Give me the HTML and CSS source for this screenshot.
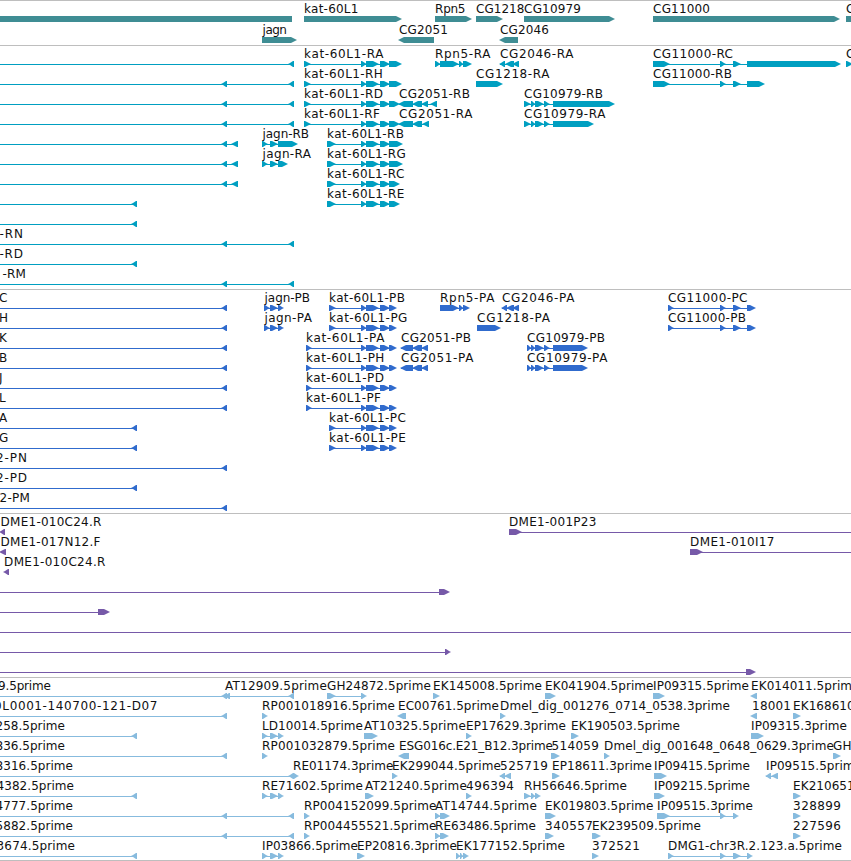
FILE: index.html
```html
<!DOCTYPE html>
<html lang="en">
<head>
    <meta charset="UTF-8">
    <meta name="viewport" content="width=device-width, initial-scale=1.0">
    <title>Genome Browser</title>
    <link rel="stylesheet" href="styles.css">
</head>
<body>
    <main class="browser">
        <section class="track genes" id="genes"></section>
        <section class="track transcripts" id="transcripts"></section>
        <section class="track proteins" id="proteins"></section>
        <section class="track bacs" id="bacs"></section>
        <section class="track ests" id="ests"></section>
    </main>
    <script src="tracks.js"></script>
</body>
</html>
```

FILE: styles.css
```css
body {
    margin: 0;
    background-color: white;
    font-family: "DejaVu Sans", sans-serif;
    overflow: hidden;
}
.browser {
    display: flex;
    flex-direction: column;
    width: 100%;
    border-bottom: 1px solid #bebebe;
}
.track {
    box-sizing: border-box;
    border-top: 1px solid #bebebe;
    overflow: hidden;
}
.track svg {
    display: block;
    width: 100%;
    height: 100%;
}
.label {
    font-size: 12px;
    fill: #111;
}

/* Track heights and colours */
.genes {
    height: 45px;
    color: #3f8d94;
}
.transcripts {
    height: 244px;
    color: #009fc1;
}
.proteins {
    height: 224px;
    color: #306bcd;
}
.bacs {
    height: 164px;
    color: #7659a8;
}
.ests {
    height: 183px;
    color: #87bbde;
}
.exon,
.intron {
    fill: currentColor;
}
.intron {
    shape-rendering: crispEdges;
}
```

FILE: tracks.js
```js
const SVG_NS = 'http://www.w3.org/2000/svg';

// Exons shared by several features
const KAT = '361-366 366-378 380-389 ';
const JAGN = '262-267 270-277 278-283';
const CDS = '264-269 270-277 278-283';

// [row, strand, exons, label, label start, label end]
const tracks = {
    genes: [
        [0, '', '-20-292'],
        [0, '+', '304-401', 'kat-60L1', 304.5, 358],
        [0, '+', '435-471', 'Rpn5', 435.5, 465],
        [0, '+', '476-502', 'CG1218', 476.5, 524],
        [0, '+', '524-614', 'CG10979', 524.5, 580.5],
        [0, '+', '653-839', 'CG11000', 653.5, 709.5],
        [0, '+', '846-880', 'CG', 846.5, 864],
        [1, '+', '262-296', 'jagn', 263, 286.5],
        [1, '-', '399-434', 'CG2051', 399.5, 447.5],
        [1, '-', '500-518', 'CG2046', 500.5, 548.5]
    ],
    transcripts: [
        [0, '-', '-20--15 289-294'],
        [1, '-', '-20--15 222-227 289-294'],
        [2, '-', '-20--15 222-227 289-294'],
        [3, '-', '-20--15 222-227 289-294'],
        [4, '-', '-20--15 222-227 232-238'],
        [5, '-', '-20--15 222-227 232-238'],
        [6, '-', '-20--15 222-227 232-238'],
        [7, '-', '-20--15 132-137'],
        [8, '-', '-20--15 132-137'],
        [9, '-', '-20--15 222-227 289-294', '-RN', 0, 22.5],
        [10, '-', '-20--15 132-137', '-RD', 0, 22.5],
        [11, '-', '-20--15 222-227 289-294', '-RM', 3, 25.5],
        [0, '+', '304-310 ' + KAT + '389-401', 'kat-60L1-RA', 304.5, 383],
        [1, '+', '304-310 ' + KAT + '389-401', 'kat-60L1-RH', 304.5, 382.5],
        [2, '+', '304-310 ' + KAT + '389-399', 'kat-60L1-RD', 304.5, 382.5],
        [3, '+', '304-310 ' + KAT + '389-399', 'kat-60L1-RF', 304.5, 379.5],
        [4, '+', '327-335 ' + KAT + '389-402', 'kat-60L1-RB', 327.5, 403.5],
        [5, '+', '327-335 ' + KAT + '389-402', 'kat-60L1-RG', 327.5, 405.5],
        [6, '+', '327-335 ' + KAT + '389-399', 'kat-60L1-RC', 327.5, 404],
        [7, '+', '327-335 ' + KAT + '389-399', 'kat-60L1-RE', 327.5, 404],
        [4, '+', '262-267 270-277 278-297', 'jagn-RB', 263, 308.5],
        [5, '+', '262-267 270-277 278-287', 'jagn-RA', 263, 310.5],
        [2, '-', '399-413 413-422 422-428 431-437', 'CG2051-RB', 399.5, 469.5],
        [3, '-', '399-413 413-422 423-429', 'CG2051-RA', 399.5, 472],
        [0, '+', '435-440 440-458 459-463 463-471', 'Rpn5-RA', 435.5, 490],
        [0, '-', '500-505 506-514 513-519', 'CG2046-RA', 500.5, 573],
        [1, '+', '476-502', 'CG1218-RA', 476.5, 549],
        [2, '+', '524-530 531-535 535-543 544-549 553-614', 'CG10979-RB', 524.5, 602.5],
        [3, '+', '524-530 531-535 535-543 544-549 553-593', 'CG10979-RA', 524.5, 605],
        [0, '+', '653-669 720-725 733-740 747-840', 'CG11000-RC', 653.5, 732.5],
        [1, '+', '653-669 720-725 733-740 747-764', 'CG11000-RB', 653.5, 731.5],
        [0, '+', '846-852 870-880', 'CG', 846.5, 864]
    ],
    proteins: [
        [0, '-', '-20--15 222-227', 'C', 0, 6.5],
        [1, '-', '-20--15 222-227', 'H', 0, 7],
        [2, '-', '-20--15 222-227', 'K', 0, 6.5],
        [3, '-', '-20--15 222-227', 'B', 0, 5.5],
        [4, '-', '-20--15 222-227', 'J', 0, 2.5],
        [5, '-', '-20--15 222-227', 'L', 0, 5],
        [6, '-', '-20--15 132-137', 'A', 0, 7.5],
        [7, '-', '-20--15 132-137', 'G', 0, 7],
        [8, '-', '-20--15 222-227', '2-PN', -3.5, 26.5],
        [9, '-', '-20--15 132-137', '2-PD', -3.5, 26.5],
        [10, '-', '-20--15 222-227', '2-PM', 0, 29.5],
        [0, '+', CDS, 'jagn-PB', 265, 309.5],
        [1, '+', CDS, 'jagn-PA', 265, 311.5],
        [0, '+', '329-335 ' + KAT + '389-396', 'kat-60L1-PB', 329.5, 404.5],
        [1, '+', '329-335 ' + KAT + '389-396', 'kat-60L1-PG', 329.5, 407],
        [2, '+', '306-311 ' + KAT + '389-396', 'kat-60L1-PA', 306.5, 384],
        [3, '+', '306-311 ' + KAT + '389-396', 'kat-60L1-PH', 306.5, 384],
        [4, '+', '306-311 ' + KAT + '389-396', 'kat-60L1-PD', 306.5, 383.5],
        [5, '+', '306-311 ' + KAT + '389-396', 'kat-60L1-PF', 306.5, 380.5],
        [6, '+', '329-335 ' + KAT + '389-396', 'kat-60L1-PC', 329.5, 405.5],
        [7, '+', '329-335 ' + KAT + '389-396', 'kat-60L1-PE', 329.5, 405.5],
        [2, '-', '401-413 413-422 422-428', 'CG2051-PB', 401.5, 470.5],
        [3, '-', '401-413 413-422 422-428', 'CG2051-PA', 401.5, 473],
        [0, '+', '440-458 459-463 463-469', 'Rpn5-PA', 440.5, 494],
        [0, '-', '502-507 507-514 513-519', 'CG2046-PA', 502.5, 574],
        [1, '+', '477-500', 'CG1218-PA', 477.5, 549.5],
        [2, '+', '527-531 531-535 535-543 544-549 553-587', 'CG10979-PB', 527.5, 604.5],
        [3, '+', '527-531 531-535 535-543 544-549 553-587', 'CG10979-PA', 527.5, 607],
        [0, '+', '668-673 720-725 733-740 747-755', 'CG11000-PC', 668.5, 747],
        [1, '+', '668-673 720-725 733-740 747-755', 'CG11000-PB', 668.5, 745.5]
    ],
    bacs: [
        [0, '-', '0-5', 'DME1-010C24.R', 1, 101],
        [1, '-', '0-6', 'DME1-017N12.F', 1, 100],
        [2, '-', '4-9', 'DME1-010C24.R', 4.5, 105],
        [0, '+', '509-521 870-880', 'DME1-001P23', 509.5, 596],
        [1, '+', '690-702 870-880', 'DME1-010I17', 690.5, 774],
        [3, '+', '-20--15 439-449'],
        [4, '+', '-20--15 98-109'],
        [5, '+', '-20--15 870-880'],
        [6, '+', '-20--15 445-450'],
        [7, '+', '-20--15 746-755']
    ],
    ests: [
        [0, '-', '-20--15 222-227', '9.5prime', -1.5, 50.5],
        [0, '-', '225-230 289-294', 'AT12909.5prime', 225.5, 326.5],
        [0, '+', '327-335 361-366', 'GH24872.5prime', 327.5, 430.5],
        [0, '+', '433-439', 'EK145008.5prime', 433.5, 541.5],
        [0, '+', '545-555', 'EK041904.5prime', 545.5, 653],
        [0, '+', '653-664', 'IP09315.5prime', 653.5, 748.5],
        [0, '-', '751-757', 'EK014011.5prime', 751.5, 859],
        [1, '-', '-20--15 222-227', '0L0001-140700-121-D07', -5.5, 157],
        [1, '+', '262-267', 'RP001018916.5prime', 262.5, 394.5],
        [1, '-', '398-406', 'EC00761.5prime', 398.5, 498.5],
        [1, '+', '500-505', 'Dmel_dig_001276_0714_0538.3prime', 500.5, 729.5],
        [1, '-', '751-757', '18001', 752.5, 790.5],
        [1, '+', '793-800', 'EK168610.5prime', 793.5, 901],
        [2, '-', '-20--15 132-137', '258.5prime', -4, 64.5],
        [2, '+', JAGN, 'LD10014.5prime', 262.5, 362.5],
        [2, '+', '364-377', 'AT10325.5prime', 364.5, 465.5],
        [2, '+', '466-471', 'EP17629.3prime', 466.5, 565.5],
        [2, '+', '571-578', 'EK190503.5prime', 571.5, 679.5],
        [2, '+', '751-763', 'IP09315.3prime', 751.5, 846.5],
        [3, '-', '-20--15 222-227', '836.5prime', -4, 64.5],
        [3, '+', '262-267', 'RP001032879.5prime', 262.5, 394.5],
        [3, '-', '399-409', 'ESG016c.E21_B12.3prime', 399.5, 552.5],
        [3, '+', '551-559', '514059', 552, 598.5],
        [3, '+', '604-609', 'Dmel_dig_001648_0648_0629.3prime', 604.5, 833.5],
        [3, '+', '833-840', 'GH14362.5prime', 833.5, 936.5],
        [4, '-', '-20--15 289-294', '8316.5prime', -4, 72.5],
        [4, '+', '293-298', 'RE01174.3prime', 293.5, 393],
        [4, '+', '392-397', 'EK299044.5prime', 392.5, 500.5],
        [4, '-', '500-505 505-511', '525719', 500.5, 547.5],
        [4, '+', '552-559', 'EP18611.3prime', 552.5, 651.5],
        [4, '+', '654-666', 'IP09415.5prime', 654.5, 749.5],
        [4, '-', '766-771 772-778', 'IP09515.5prime', 766.5, 861.5],
        [5, '-', '-20--15 132-137', '4382.5prime', -3, 73.5],
        [5, '+', JAGN, 'RE71602.5prime', 262.5, 362.5],
        [5, '+', '365-373', 'AT21240.5prime', 365.5, 466.5],
        [5, '+', '466-471', '496394', 466.5, 513.5],
        [5, '+', '524-530 531-535 535-540', 'RH56646.5prime', 524.5, 626.5],
        [5, '+', '654-664', 'IP09215.5prime', 654.5, 749.5],
        [5, '+', '793-800', 'EK210651.5prime', 793.5, 901],
        [6, '-', '-20--15 222-227 289-294', '4777.5prime', -4, 72.5],
        [6, '+', '304-309', 'RP004152099.5prime', 304.5, 436],
        [6, '+', '435-440 440-449', 'AT14744.5prime', 435.5, 536.5],
        [6, '+', '545-555', 'EK019803.5prime', 545.5, 653],
        [6, '+', '657-669 720-725 733-738', 'IP09515.3prime', 657.5, 752.5],
        [6, '+', '793-800', '328899', 793.5, 840.5],
        [7, '-', '-20--15 222-227 289-294', '5882.5prime', -4, 72.5],
        [7, '+', '304-309', 'RP004455521.5prime', 304.5, 436],
        [7, '+', '435-440 440-448', 'RE63486.5prime', 435.5, 535.5],
        [7, '+', '545-553', '340557', 545.5, 592.5],
        [7, '+', '592-600', 'EK239509.5prime', 592.5, 700.5],
        [7, '+', '793-800', '227596', 793.5, 840.5],
        [8, '-', '-20--15 132-137', '3674.5prime', -3, 74.5],
        [8, '+', JAGN, 'IP03866.5prime', 262.5, 357.5],
        [8, '+', '357-364', 'EP20816.3prime', 357.5, 456.5],
        [8, '+', '456-460 460-463 463-468', 'EK177152.5prime', 456.5, 564.5],
        [8, '+', '592-598', '372521', 592.5, 639.5],
        [8, '+', '668-673 720-725 733-740 747-752', 'DMG1-chr3R.2.123.a.5prime', 668.5, 841.5]
    ]
};

function add(parent, name, attrs) {
    const el = document.createElementNS(SVG_NS, name);
    for (const key in attrs) {
        el.setAttribute(key, attrs[key]);
    }
    parent.appendChild(el);
    return el;
}

// Box ending in a slightly rounded arrow head that points along the strand
function exonPoints(a, b, y, strand) {
    const head = Math.min(6, b - a);
    if (strand === '+') {
        const neck = b - head + 1;
        return `${a},${y} ${neck},${y} ${b - 1},${y + 2} ${b + 1},${y + 3} ${b - 1},${y + 4} ${neck},${y + 6} ${a},${y + 6}`;
    }
    if (strand === '-') {
        const neck = a + head - 1;
        return `${b},${y} ${neck},${y} ${a + 1},${y + 2} ${a - 1},${y + 3} ${a + 1},${y + 4} ${neck},${y + 6} ${b},${y + 6}`;
    }
    return `${a},${y} ${b},${y} ${b},${y + 6} ${a},${y + 6}`;
}

for (const id in tracks) {
    const svg = add(document.getElementById(id), 'svg', {});
    const rowHeight = id === 'genes' ? 21 : 20;

    for (const [row, strand, exonList, label, x1, x2] of tracks[id]) {
        const top = row * rowHeight;
        const exons = exonList.split(' ').map(e => e.match(/^(-?\d+)-(-?\d+)$/).slice(1).map(Number));
        const start = exons[0][0];
        const end = exons[exons.length - 1][1];

        if (exons.length > 1) {
            add(svg, 'rect', { class: 'intron', x: start, y: top + 18, width: end - start - 1, height: 1 });
        }
        for (const [a, b] of exons) {
            add(svg, 'polygon', { class: 'exon', points: exonPoints(a, b, top + 15, strand) });
        }
        if (label) {
            // single letters keep their own width and sit against the left edge
            const single = label.length === 1;
            const text = add(svg, 'text', { class: 'label', x: single ? x1 - 1 : x1 - 0.4, y: top + 12 });
            if (!single) {
                text.setAttribute('textLength', x2 - x1 + 0.8);
            }
            text.textContent = label;
        }
    }
}
```
